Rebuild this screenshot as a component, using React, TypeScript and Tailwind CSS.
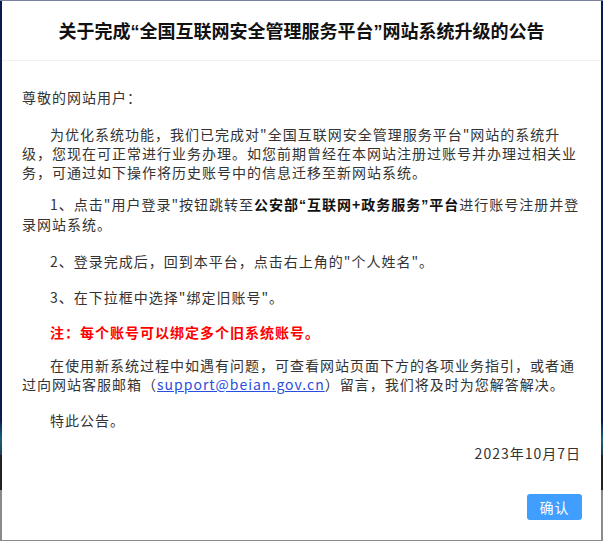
import React from 'react';

const font = { fontFamily: '"Noto Sans CJK SC", "Noto Sans", sans-serif' };

// curly quotes in the reference are narrow, western-width glyphs
function Q({ c }: { c: string }) {
    return <span className="font-['Liberation_Sans',sans-serif]">{c}</span>;
}

export default function App() {
    return (
        <div className="relative w-[603px] h-[541px] overflow-hidden" style={font}>
            {/* page behind the mask */}
            <div className="flex flex-col h-full">
                <div className="h-[1px] bg-[#7a809f]" />
                <div className="h-[422px] bg-[#0b1a50]" />
                <div className="h-[32px] bg-[linear-gradient(#0b2a5e,#1d5f78,#1a3f55)]" />
                <div className="h-[35px] bg-[#222222]" />
                <div className="flex-1 bg-[#8a8a8a]" />
            </div>

            <div className="absolute left-[2px] top-[1px] w-[599px] bg-white">
                <div className="pt-[17px] pb-[16px] border-b border-[#f0f0f0] text-center">
                    <h1 className="text-[18px] leading-[24px] font-bold text-[#111]">
                        关于完成<Q c="“" />全国互联网安全管理服务平台<Q c="”" />网站系统升级的公告
                    </h1>
                </div>

                <div className="px-[20px] pt-[27px] text-[14px] leading-[19px] tracking-[1px] text-[#333]">
                    <p className="mb-[18px]">尊敬的网站用户：</p>
                    <p className="indent-[28px] mb-[13px]">
                        为优化系统功能，我们已完成对"全国互联网安全管理服务平台"网站的系统升级，您现在可正常进行业务办理。如您前期曾经在本网站注册过账号并办理过相关业务，可通过如下操作将历史账号中的信息迁移至新网站系统。
                    </p>
                    <p className="indent-[28px] mb-[18px]">
                        1、点击"用户登录"按钮跳转至<strong className="font-bold text-[#111]">公安部<Q c="“" />互联网+政务服务<Q c="”" />平台</strong>进行账号注册并登录网站系统。
                    </p>
                    <p className="indent-[28px] mb-[17px]">2、登录完成后，回到本平台，点击右上角的"个人姓名"。</p>
                    <p className="indent-[28px] mb-[16px]">3、在下拉框中选择"绑定旧账号"。</p>
                    <p className="indent-[28px] mb-[14px] font-bold text-[#ff0000]">注：每个账号可以绑定多个旧系统账号。</p>
                    <p className="indent-[28px] mb-[17px]">
                        在使用新系统过程中如遇有问题，可查看网站页面下方的各项业务指引，或者通过向网站客服邮箱（<a className="text-[#2a4ee0] underline">support@beian.gov.cn</a>）留言，我们将及时为您解答解决。
                    </p>
                    <p className="indent-[28px] mb-[14px]">特此公告。</p>
                    <p className="text-right">2023年10月7日</p>
                </div>

                <div className="flex justify-end pt-[31px] pb-[20px] pr-[19px]">
                    <button className="w-[55px] h-[26px] rounded-[3px] bg-[#409eff] text-white text-[14px] leading-[26px] tracking-[1px]">
                        确认
                    </button>
                </div>
            </div>
        </div>
    );
}
